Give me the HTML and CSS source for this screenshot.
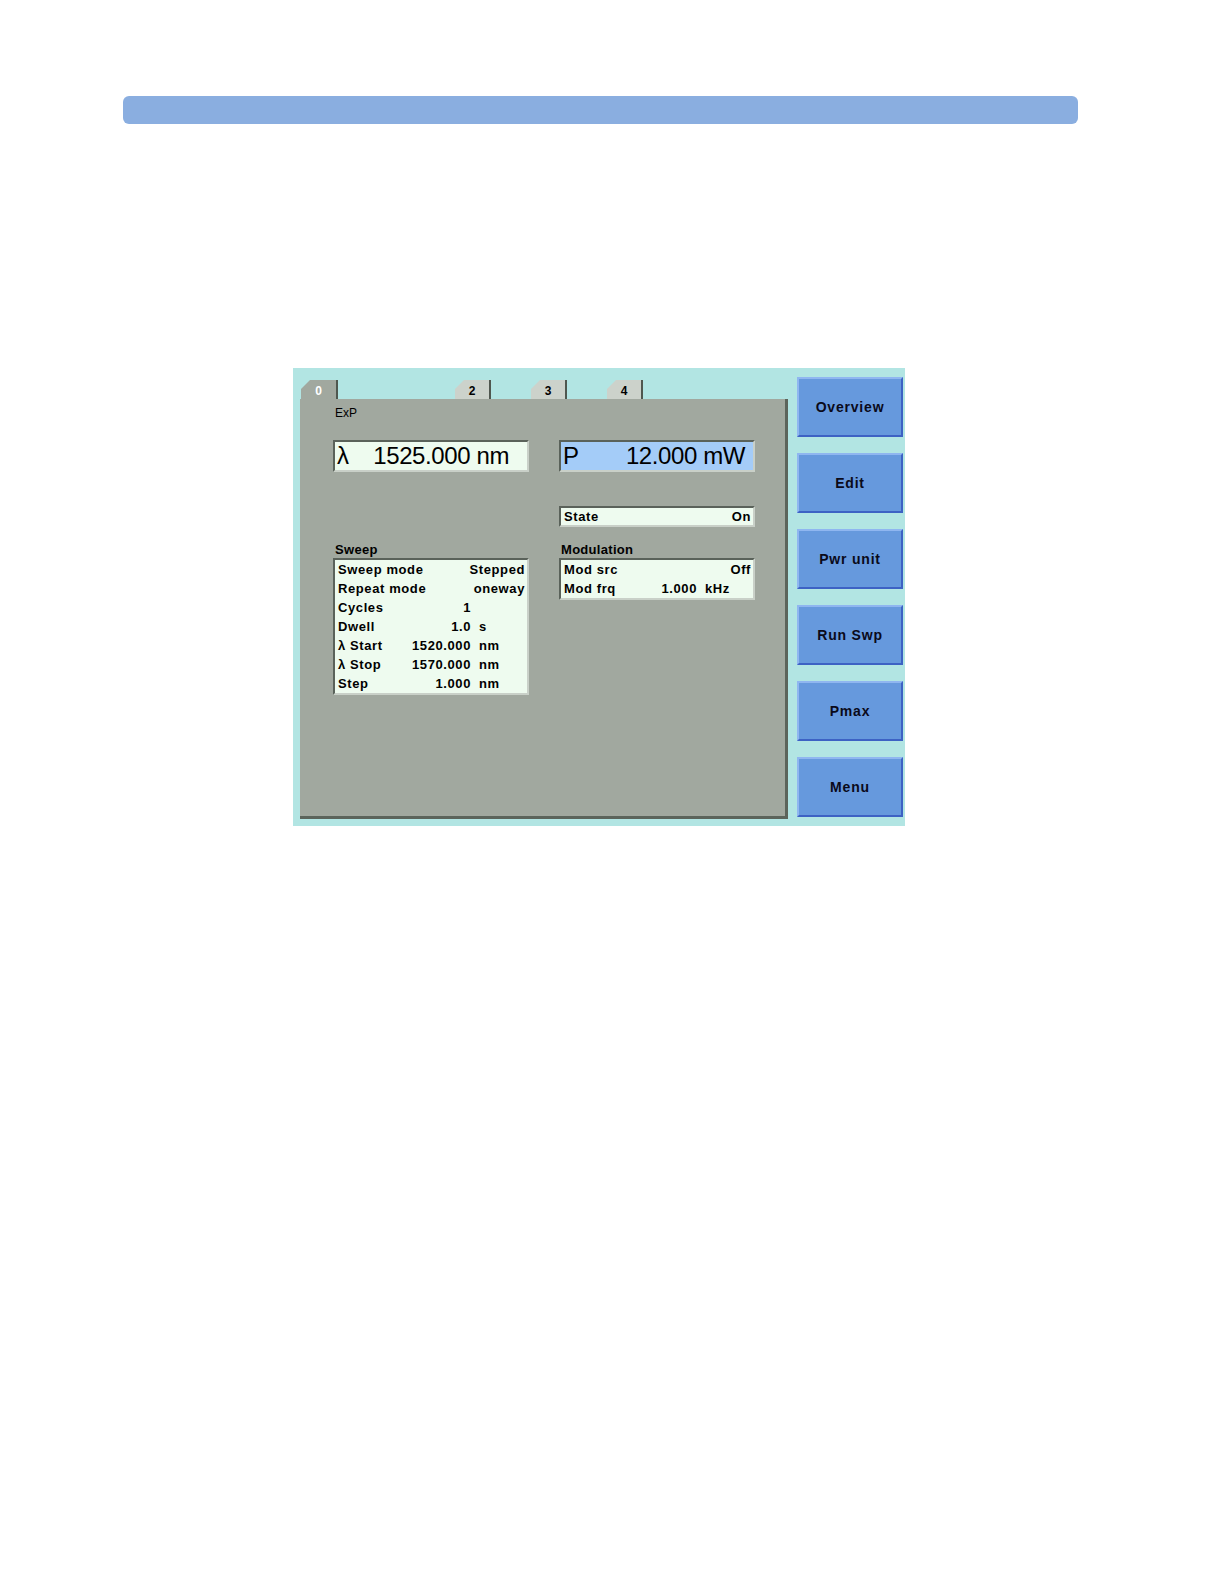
FILE: index.html
```html
<!DOCTYPE html>
<html>
<head>
<meta charset="utf-8">
<link rel="stylesheet" href="styles.css">
</head>
<body>
<div class="page">
  <div class="topbar"></div>
  <div class="screen">
    <div class="main">
      <div class="tabs">
        <div class="tab tab-active">0</div>
        <div class="tab tab-2">2</div>
        <div class="tab tab-3">3</div>
        <div class="tab tab-4">4</div>
      </div>
      <div class="panel">
        <div class="title">ExP</div>
        <div class="grid">
          <div class="bigbox wave"><span class="sym">λ</span><span class="bigval">1525.000 nm</span></div>
          <div class="bigbox power"><span class="sym">P</span><span class="bigval">12.000 mW</span></div>
          <div class="box state"><div class="row"><span class="lbl">State</span><span class="val">On</span></div></div>
          <div class="section sweep">
            <div class="seclabel">Sweep</div>
            <div class="box">
              <div class="row"><span class="lbl">Sweep mode</span><span class="val">Stepped</span></div>
              <div class="row"><span class="lbl">Repeat mode</span><span class="val">oneway</span></div>
              <div class="row"><span class="lbl">Cycles</span><span class="val">1</span><span class="unit"></span></div>
              <div class="row"><span class="lbl">Dwell</span><span class="val">1.0</span><span class="unit">s</span></div>
              <div class="row"><span class="lbl">λ Start</span><span class="val">1520.000</span><span class="unit">nm</span></div>
              <div class="row"><span class="lbl">λ Stop</span><span class="val">1570.000</span><span class="unit">nm</span></div>
              <div class="row"><span class="lbl">Step</span><span class="val">1.000</span><span class="unit">nm</span></div>
            </div>
          </div>
          <div class="section mod">
            <div class="seclabel">Modulation</div>
            <div class="box">
              <div class="row"><span class="lbl">Mod src</span><span class="val">Off</span></div>
              <div class="row"><span class="lbl">Mod frq</span><span class="val">1.000</span><span class="unit">kHz</span></div>
            </div>
          </div>
        </div>
      </div>
    </div>
    <div class="softkeys">
      <div class="key">Overview</div>
      <div class="key">Edit</div>
      <div class="key">Pwr unit</div>
      <div class="key">Run Swp</div>
      <div class="key">Pmax</div>
      <div class="key">Menu</div>
    </div>
  </div>
</div>
</body>
</html>
```
FILE: styles.css
```css
html, body {
  margin: 0;
  padding: 0;
  background: #ffffff;
}
body {
  font-family: "Liberation Sans", Arial, sans-serif;
  color: #000;
}
.page {
  width: 1222px;
  min-height: 1582px;
  padding-top: 96px;
  box-sizing: border-box;
}
.topbar {
  margin-left: 123px;
  width: 955px;
  height: 28px;
  border-radius: 6px;
  background: #8aaee0;
}
.screen {
  margin-top: 244px;
  margin-left: 293px;
  width: 612px;
  height: 458px;
  background: #b2e5e3;
  display: flex;
}
.main {
  margin-left: 7px;
  margin-top: 12px;
  width: 488px;
  display: flex;
  flex-direction: column;
}
.tabs {
  display: flex;
  height: 19px;
  align-items: flex-end;
}
.tab {
  height: 19px;
  box-sizing: border-box;
  border-right: 2px solid #4f574f;
  background: #ccd2cb;
  font-size: 12px;
  font-weight: bold;
  line-height: 22px;
  text-align: center;
  clip-path: polygon(0 100%, 0 9px, 9px 0, 100% 0, 100% 100%);
}
.tab-active {
  margin-left: 1px;
  width: 37px;
  background: #a1a89f;
  color: #ffffff;
}
.tab-2 {
  margin-left: 117px;
  width: 36px;
}
.tab-3 {
  margin-left: 40px;
  width: 36px;
}
.tab-4 {
  margin-left: 40px;
  width: 36px;
}
.panel {
  height: 420px;
  box-sizing: border-box;
  background: #a1a89f;
  border-right: 3px solid #5c645b;
  border-bottom: 3px solid #5c645b;
  padding: 7px 0 0 33px;
}
.title {
  font-size: 12px;
  line-height: 14px;
  margin-left: 2px;
}
.grid {
  margin-top: 20px;
  display: grid;
  grid-template-columns: 196px 196px;
  column-gap: 30px;
  grid-template-areas:
    "wave power"
    ". state"
    "sweep mod";
  align-items: start;
}
.wave { grid-area: wave; }
.power { grid-area: power; }
.state { grid-area: state; margin-top: 34px; }
.sweep { grid-area: sweep; }
.mod { grid-area: mod; }

.bigbox {
  height: 32px;
  box-sizing: border-box;
  border-style: solid;
  border-width: 2px;
  border-color: #5a625a #c9d0c8 #c9d0c8 #5a625a;
  background: #eefbef;
  display: flex;
  align-items: center;
  font-size: 24px;
  line-height: 28px;
  letter-spacing: -0.4px;
  padding-left: 2px;
}
.bigbox .bigval {
  margin-left: auto;
}
.wave { padding-right: 18px; }
.power {
  background: #a4ccf8;
  padding-right: 8px;
}
.box {
  box-sizing: border-box;
  border-style: solid;
  border-width: 2px;
  border-color: #5a625a #c9d0c8 #c9d0c8 #5a625a;
  background: #eefbef;
}
.row {
  display: flex;
  height: 19px;
  line-height: 19px;
  font-size: 13px;
  font-weight: bold;
  letter-spacing: 0.6px;
  padding: 0 2px 0 3px;
  white-space: nowrap;
}
.state .row {
  height: 17px;
  line-height: 17px;
}
.row .lbl {
  flex: 1;
}
.row .val {
  text-align: right;
}
.row .unit {
  width: 54px;
  box-sizing: border-box;
  padding-left: 8px;
}
.section {
  margin-top: 15px;
}
.seclabel {
  font-size: 13px;
  font-weight: bold;
  letter-spacing: 0.3px;
  line-height: 16px;
  margin-left: 2px;
}
.softkeys {
  margin-left: 9px;
  margin-top: 9px;
  display: flex;
  flex-direction: column;
  gap: 16px;
}
.key {
  width: 106px;
  height: 60px;
  box-sizing: border-box;
  border-style: solid;
  border-width: 2px;
  border-color: #8fb6f0 #3d62c4 #3d62c4 #8fb6f0;
  background: #6699dd;
  display: flex;
  align-items: center;
  justify-content: center;
  font-size: 14px;
  font-weight: bold;
  letter-spacing: 0.8px;
  color: #0a0a1a;
}
```
